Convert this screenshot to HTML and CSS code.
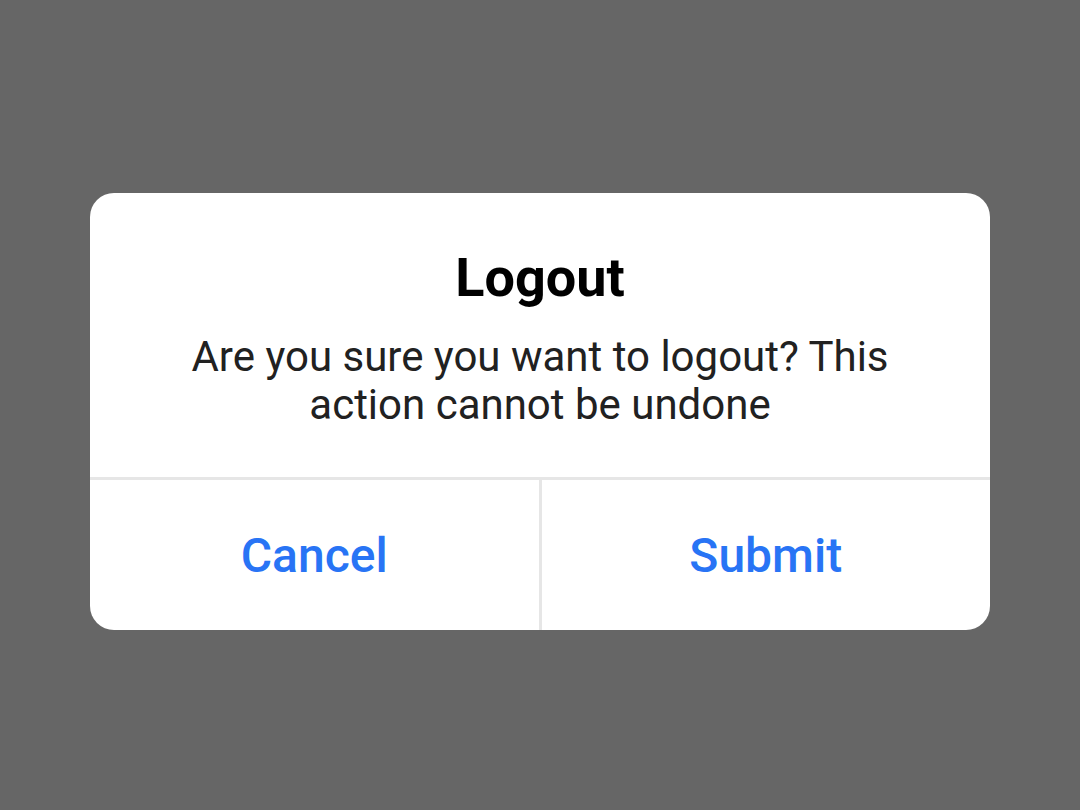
FILE: index.html
```html
<!DOCTYPE html>
<html>
<head>
<meta charset="utf-8">
<link rel="stylesheet" href="styles.css">
</head>
<body>
<div class="overlay">
  <div class="dialog">
    <div class="content">
      <h1 class="title">Logout</h1>
      <p class="message">Are you sure you want to logout? This action cannot be undone</p>
    </div>
    <div class="actions">
      <button class="action">Cancel</button>
      <button class="action">Submit</button>
    </div>
  </div>
</div>
</body>
</html>
```
FILE: styles.css
```css
html, body {
  margin: 0;
  padding: 0;
  height: 100%;
}
body {
  background: #666666;
  font-family: Roboto, "Liberation Sans", sans-serif;
}
.overlay {
  padding: 193px 90px 0;
}
.dialog {
  background: #ffffff;
  border-radius: 24px;
  overflow: hidden;
}
.content {
  padding: 53px 80px 48px;
  text-align: center;
}
.title {
  margin: 0;
  font-size: 54px;
  font-weight: 700;
  color: #000000;
  line-height: 64px;
}
.message {
  margin: 23px 0 0;
  font-size: 42px;
  line-height: 48px;
  color: #212121;
}
.actions {
  display: flex;
  border-top: 3px solid #e6e6e6;
  height: 150px;
}
.action {
  flex: 1;
  border: none;
  background: transparent;
  font-family: Roboto, "Liberation Sans", sans-serif;
  font-size: 48px;
  font-weight: 500;
  color: #2874f5;
  padding: 0;
}
.action + .action {
  border-left: 3px solid #e6e6e6;
}
```
